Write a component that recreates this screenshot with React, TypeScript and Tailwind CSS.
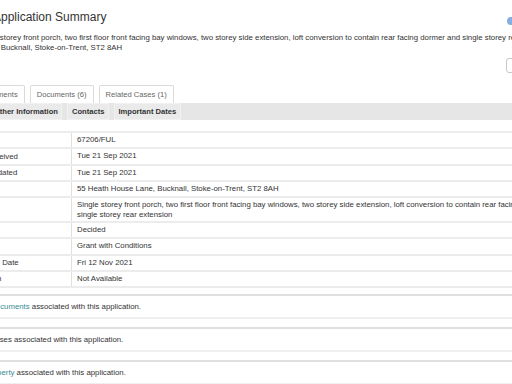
import React from "react";

type Row = { label: string; value: string[] };

const rows: Row[] = [
  { label: "Reference", value: ["67206/FUL"] },
  { label: "Application Received", value: ["Tue 21 Sep 2021"] },
  { label: "Application Validated", value: ["Tue 21 Sep 2021"] },
  { label: "Address", value: ["55 Heath House Lane, Bucknall, Stoke-on-Trent, ST2 8AH"] },
  {
    label: "Proposal",
    value: [
      "Single storey front porch, two first floor front facing bay windows, two storey side extension, loft conversion to contain rear facing dormer and",
      "single storey rear extension",
    ],
  },
  { label: "Status", value: ["Decided"] },
  { label: "Decision", value: ["Grant with Conditions"] },
  { label: "Decision Issued Date", value: ["Fri 12 Nov 2021"] },
  { label: "Appeal Decision", value: ["Not Available"] },
];

const tabs = ["Comments", "Documents (6)", "Related Cases (1)"];
const subTabs = ["Further Information", "Contacts", "Important Dates"];

function Section({ children }: { children: React.ReactNode }) {
  return (
    <div className="border-t-2 border-b-2 border-t-[#e0e0e0] border-b-[#efefef] h-[25px] flex items-center pl-[4px] whitespace-nowrap">
      {children}
    </div>
  );
}

export default function App() {
  return (
    <div className="w-[512px] h-[384px] overflow-hidden bg-white text-[#333] font-['Liberation_Sans',Arial,sans-serif] text-[7.8px] flex flex-col">
      {/* header */}
      <div className="flex items-start pt-[10px]">
        <h1 className="-ml-[7px] text-[12px] leading-[14px] font-normal text-[#333] whitespace-nowrap">Application Summary</h1>
        <div className="ml-auto mt-[7px] -mr-[3px] w-[8px] h-[8px] rounded-full bg-[#86aee0]" />
      </div>

      <div className="mt-[8px] -ml-[24px] leading-[10px] whitespace-nowrap">
        <div>
          Single storey front porch, two first floor front facing bay windows, two storey side extension, loft conversion to contain rear facing dormer and single storey rear extension | 55 Heath House
        </div>
        <div className="ml-[3px]">Lane, Bucknall, Stoke-on-Trent, ST2 8AH</div>
      </div>

      <div className="flex justify-end mt-[5px]">
        <div className="w-[11px] h-[15px] -mr-[5px] border border-[#c8c8c8] rounded-[3px] bg-white" />
      </div>

      {/* tabs */}
      <div className="mt-[12px] -ml-[26px] flex gap-[5px] text-[7.6px]">
        {tabs.map((t) => (
          <div
            key={t}
            className="h-[18px] px-[6px] flex items-center border border-b-0 border-[#dadada] rounded-t-[2px] text-[#666] whitespace-nowrap bg-white"
          >
            {t}
          </div>
        ))}
      </div>

      <div className="h-[23px] bg-[#e6e6e6] flex items-center text-[7.6px]">
        <div className="-ml-[17px] flex gap-[5px]">
          {subTabs.map((t) => (
            <div
              key={t}
              className="h-[17px] px-[3.5px] flex items-center border border-[#f1f1f1] bg-[#eaeaea] font-bold text-[#333] whitespace-nowrap"
            >
              {t}
            </div>
          ))}
        </div>
      </div>

      <div className="-ml-[55px] w-[900px] flex flex-col">
        {/* summary table */}
        <div className="mt-[11px] border-t-2 border-[#ececec]">
          {rows.map((r) => (
            <div key={r.label} className="flex border-b-2 border-[#ececec]">
              <div className="w-[127px] shrink-0 border-r border-[#e0e0e0] flex items-center whitespace-nowrap">
                {r.label}
              </div>
              <div className={`pl-[5px] leading-[10px] flex flex-col justify-center whitespace-nowrap ${r.value.length > 1 ? "h-[23px]" : "h-[14.25px]"}`}>
                {r.value.map((v) => (
                  <div key={v}>{v}</div>
                ))}
              </div>
            </div>
          ))}
        </div>

        <div className="mt-[6px]">
          <Section>
            There are 6&nbsp;<span className="text-[#3a8c96]">documents</span>&nbsp;associated with this application.
          </Section>
        </div>
        <div className="mt-[8px]">
          <Section>There are 0 cases associated with this application.</Section>
        </div>
        <div className="mt-[8px]">
          <Section>
            There is 1&nbsp;<span className="text-[#3a8c96]">property</span>&nbsp;associated with this application.
          </Section>
        </div>
      </div>
    </div>
  );
}
